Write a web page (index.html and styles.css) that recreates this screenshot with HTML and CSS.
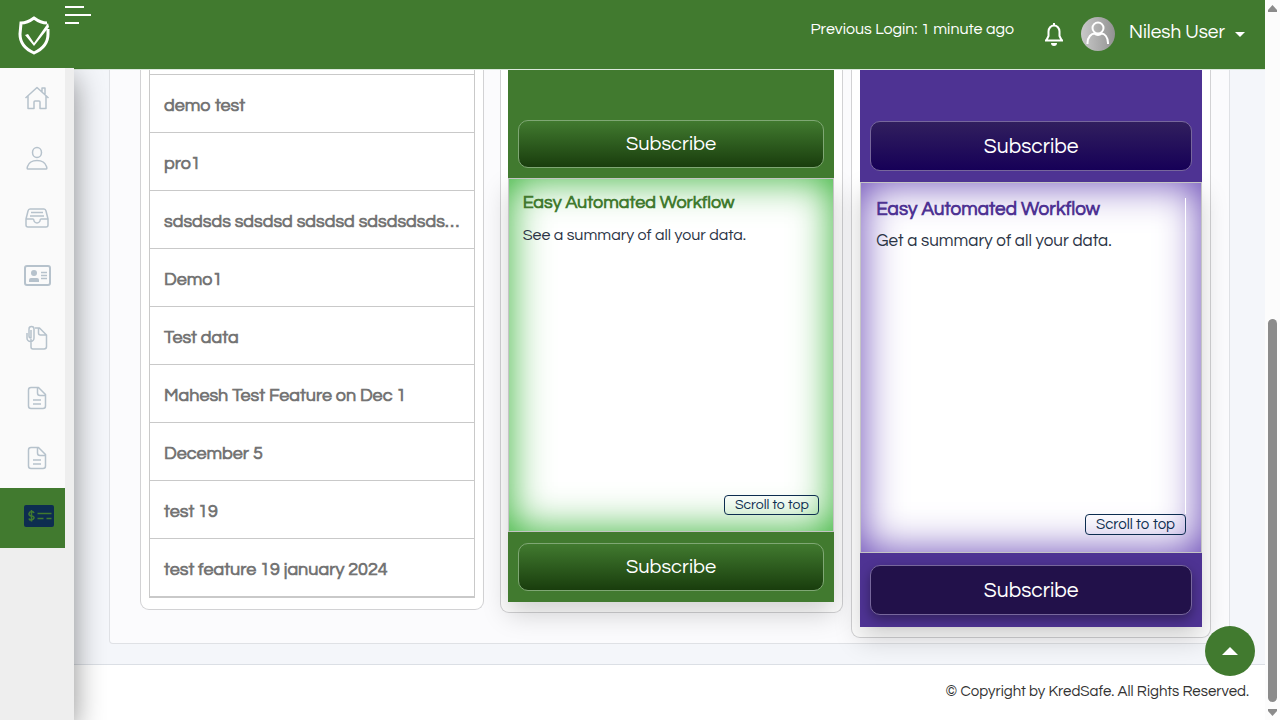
FILE: index.html
```html
<!DOCTYPE html>
<html lang="en">
<head>
<meta charset="utf-8">
<meta name="viewport" content="width=device-width, initial-scale=1">
<title>KredSafe</title>
<link rel="stylesheet" href="styles.css">
</head>
<body>
<div class="app">
  <header class="topbar">
    <a class="logo" href="#" aria-label="KredSafe home">
      <svg width="34" height="40" viewBox="0 0 34 40" fill="none" stroke="#fff" stroke-width="3"><path d="M31 14v5c0 8-5 15-14 19C8 34 3 27 3 19L4 8c5 0 9-2 13-5 4 3 8 5 13 5"/><path d="M8 20l3-1 6 9L31 8l1 4-15 19z" fill="#fff" stroke="none"/></svg>
    </a>
    <button class="menu" aria-label="Toggle menu">
      <svg width="26" height="18" viewBox="0 0 26 18" fill="#fff"><path d="M0 0h19v2H0zM0 8h26v2H0zM0 16h14v2H0z"/></svg>
    </button>
    <div class="account">
      <span class="login">Previous Login: 1 minute ago</span>
      <button class="bell" aria-label="Notifications">
        <svg width="20" height="24" viewBox="0 0 20 24" fill="none" stroke="#fff" stroke-width="2"><path d="M10 1v2M1 18.500h18M2.500 18l2-4V9.500a5.500 6 0 0 1 11 0V14l2 4" stroke-linejoin="round"/><path d="M7 21h6a3 3 0 0 1-6 0z" fill="#fff" stroke="none"/></svg>
      </button>
      <button class="user">
        <span class="avatar"><svg width="34" height="34" viewBox="0 0 34 34" fill="none" stroke="#fff" stroke-width="2"><circle cx="17" cy="11" r="5.5"/><path d="M6.500 27v-1c0-6 4-9.500 7-9.500 2 2 5 2 7 0 3 0 6.500 3.500 6.500 9.500v1"/></svg></span>
        <span class="name">Nilesh User</span>
        <svg width="10" height="5" viewBox="0 0 10 5" fill="#fff"><path d="M0 0h10L5 5z"/></svg>
      </button>
    </div>
  </header>
  <div class="layout">
    <nav class="sidebar" aria-label="Main">
      <a href="#" aria-label="Home"><svg width="26" height="26" viewBox="0 0 26 26"><path d="M1.500 13L13 2.500 24.500 13M4 11v12.500h6V17q0-1 1-1h4q1 0 1 1v6.500h6V11M18 7V3h3v7"/></svg></a>
      <a href="#" aria-label="Profile"><svg width="26" height="26" viewBox="0 0 26 26"><ellipse cx="13" cy="7.500" rx="4.500" ry="5"/><path d="M4 24c-1 0-1-1-.500-2.500C5 17 8.500 15.500 13 15.500s8 1.500 9.500 6C23 23 23 24 22 24z"/></svg></a>
      <a href="#" aria-label="Inbox"><svg width="26" height="26" viewBox="0 0 26 26"><path d="M2 14l2-8q.5-2 2-2h14q1.500 0 2 2l2 8v6q0 2-2 2H4q-2 0-2-2zM2 14h7q1 0 1 2 1 2 3 2t3-2q0-2 1-2h7M7 7.500h12M6 11h14"/></svg></a>
      <a class="high" href="#" aria-label="Contacts"><svg width="28" height="22" viewBox="0 0 28 22"><rect x="1" y="1" width="25" height="19" rx="2" stroke-width="2"/><path d="M17 7.500h6M17 10.500h6M17 13.500h6"/><circle class="solid" cx="10" cy="8" r="3"/><path class="solid" d="M5 17v-2q0-2 2-2h6q2 0 2 2v2z"/></svg></a>
      <a href="#" aria-label="Attachments"><svg width="26" height="26" viewBox="0 0 26 26"><path d="M7 14v8q0 2 2 2h11q2.500 0 2.500-2.500V10l-7-7H11M14.500 3v5q0 2 2 2h6M3 8v5a3.500 3.500 0 0 0 7 0V4a2.500 2.500 0 0 0-5 0v7q0 2 2 2V5"/></svg></a>
      <a href="#" aria-label="Documents"><svg width="26" height="26" viewBox="0 0 26 26"><path d="M7 2.500h7.500l7 7V21q0 2.500-2.500 2.500H7q-2.500 0-2.500-2.500V5Q4.500 2.500 7 2.500zM13.500 2.500V8q0 2.500 2.500 2.500h5.500M9 15h8M9 19h8"/></svg></a>
      <a href="#" aria-label="Reports"><svg width="26" height="26" viewBox="0 0 26 26"><path d="M7 2.500h7.500l7 7V21q0 2.500-2.500 2.500H7q-2.500 0-2.500-2.500V5Q4.500 2.500 7 2.500zM13.500 2.500V8q0 2.500 2.500 2.500h5.500M9 15h8M9 19h8"/></svg></a>
      <a class="active high" href="#" aria-label="Subscriptions" aria-current="page"><svg width="30" height="22" viewBox="0 0 30 22"><rect width="30" height="22" rx="2" fill="#0d2d50" stroke="none"/><path stroke="#417a2f" d="M13.500 8.500h14M13.500 13.500h6M22.500 13.500h5M10 8q-.5-1.500-2.500-1.500T5 8.500 7.500 11 10 13t-2.500 2T5 13.500M7.500 5v11.500"/></svg></a>
    </nav>
    <div class="page">
      <main class="content">
        <div class="panel">
          <section class="card features">
            <ul class="list">
              <li>demo test</li>
              <li>pro1</li>
              <li>sdsdsds sdsdsd sdsdsd sdsdsdsdsdsdsd</li>
              <li>Demo1</li>
              <li>Test data</li>
              <li>Mahesh Test Feature on Dec 1</li>
              <li>December 5</li>
              <li>test 19</li>
              <li>test feature 19 january 2024</li>
            </ul>
          </section>
          <section class="card plan green">
            <div class="plan-head"><button class="subscribe">Subscribe</button></div>
            <div class="plan-main">
              <div class="plan-body">
                <div class="plan-text">
                  <h2>Easy Automated Workflow</h2>
                  <p>See a summary of all your data.</p>
                </div>
                <button class="scroll-top">Scroll to top</button>
              </div>
              <div class="plan-foot"><button class="subscribe">Subscribe</button></div>
            </div>
          </section>
          <section class="card plan purple">
            <div class="plan-head"><button class="subscribe">Subscribe</button></div>
            <div class="plan-main">
              <div class="plan-body">
                <div class="plan-text">
                  <h2>Easy Automated Workflow</h2>
                  <p>Get a summary of all your data.</p>
                </div>
                <button class="scroll-top">Scroll to top</button>
              </div>
              <div class="plan-foot"><button class="subscribe raised">Subscribe</button></div>
            </div>
          </section>
        </div>
      </main>
      <footer class="footer">© Copyright by KredSafe. All Rights Reserved.</footer>
    </div>
  </div>
</div>
<div class="scrollbar" aria-hidden="true">
  <svg width="9" height="7" viewBox="0 0 9 7"><path d="M4.500 0L9 5v2H0V5z"/></svg>
  <div class="track"></div>
  <div class="thumb"></div>
  <svg width="9" height="7" viewBox="0 0 9 7"><path d="M4.500 7L9 2V0H0v2z"/></svg>
</div>
<button class="to-top" aria-label="Back to top"><svg width="16" height="8" viewBox="0 0 16 8" fill="#fff"><path d="M8 0l8 8H0z"/></svg></button>
</body>
</html>
```
FILE: styles.css
```css
* { box-sizing: border-box; }

body {
  margin: 0;
  min-height: 100vh;
  display: flex;
  background: #fff;
  color: #2b3445;
  font-family: Questrial, Inter, "Open Sans", sans-serif;
  font-size: 16px;
}

button {
  font-family: inherit;
  padding: 0;
  border: 0;
  background: none;
  color: inherit;
  cursor: pointer;
}

a { color: inherit; text-decoration: none; }
svg { display: block; flex: none; }

.app {
  flex: 1;
  min-width: 0;
  display: flex;
  flex-direction: column;
}

.topbar {
  display: flex;
  align-items: flex-start;
  height: 70px;
  background: #417a2f;
  border-bottom: 1px solid #dbe8dc;
  color: #fff;
}

.logo { width: 65px; padding: 15px 0 0 17px; }
.menu { margin-top: 6px; }

.account {
  display: flex;
  align-items: center;
  margin-left: auto;
  padding: 17px 20px 0 0;
}

.login { margin: 0 30px 10px 0; }
.bell { margin-right: 17px; }

.user {
  display: flex;
  align-items: center;
  gap: 10px;
  font-size: 19px;
}

.name { margin-bottom: 4px; }

.avatar {
  border-radius: 50%;
  margin-right: 4px;
  background: linear-gradient(90deg, #c9c9c9, #929292);
}

.layout { display: flex; flex: 1; }

.sidebar {
  position: relative;
  z-index: 2;
  flex: none;
  width: 74px;
  margin-top: -2px;
  background: #eee;
  box-shadow: 0 10px 30px rgba(0, 0, 0, .45);
  clip-path: inset(0 -60px 0 0);
}

.sidebar a {
  display: flex;
  align-items: center;
  width: 65px;
  height: 60px;
  padding-left: 24px;
  background: #fafafa;
}

.sidebar .high { padding-bottom: 4px; }
.sidebar .active { background: #417a2f; }

.sidebar svg {
  fill: none;
  stroke: #b6c2cc;
  stroke-width: 1.5;
  stroke-linejoin: round;
}

.sidebar .solid { fill: #b6c2cc; stroke: none; }

.page {
  flex: 1;
  min-width: 0;
  display: flex;
  flex-direction: column;
}

.content {
  flex: 1;
  padding: 0 35px 20px;
  background: #f4f6fa;
}

.panel {
  display: grid;
  grid-template-columns: repeat(3, minmax(0, 1fr));
  gap: 16px;
  align-items: start;
  padding: 0 26px 5px 30px;
  background: #fbfbfd;
  border: 1px solid #dfe1e5;
  border-top: 0;
  border-radius: 0 0 4px 4px;
}

.card {
  padding: 0 8px 10px;
  background: #fff;
  border: 1px solid #d2d2d4;
  border-top: 0;
  border-radius: 0 0 9px 9px;
}

.features { padding-bottom: 11px; }

.list {
  margin: 0;
  padding: 4px 0 0;
  list-style: none;
  border: 1px solid #c9c9c9;
  border-width: 0 1px 2px;
}

.list li {
  height: 58px;
  padding: 4px 14px 0;
  border-top: 1px solid #c9c9c9;
  color: #747474;
  font-size: 18px;
  font-weight: 700;
  line-height: 53px;
  white-space: nowrap;
  overflow: hidden;
  text-overflow: ellipsis;
}

.plan { padding-left: 7px; }
.plan-main { box-shadow: 0 12px 25px rgba(0, 0, 0, .18); }

.plan-head {
  position: relative;
  display: flex;
  align-items: flex-end;
  height: 108px;
  padding: 10px;
}

.plan-foot { padding: 11px 10px; }

.plan-body {
  display: flex;
  flex-direction: column;
  height: 354px;
  padding: 14px 14px 16px;
  border: 1px solid #c4c4c4;
}

.plan-text { flex: 1; }

.plan h2 {
  margin: 0;
  font-size: 18px;
  font-weight: 700;
  line-height: 20px;
}

.plan p {
  margin: 11px 0 0;
  line-height: 22px;
}

.subscribe {
  display: block;
  width: 100%;
  height: 48px;
  border: 1px solid #7fa774;
  border-radius: 10px;
  color: #fff;
  font-size: 20px;
}

.scroll-top {
  align-self: flex-end;
  width: 95px;
  height: 20px;
  border: 1px solid #0d2d50;
  border-radius: 4px;
  color: #0d2d50;
  font-size: 14px;
  line-height: 16px;
}

.green .plan-head, .green .plan-foot { background: #417a2f; }
.green .plan-body { box-shadow: inset 0 0 40px #30b030; }
.green h2 { color: #417a2f; }
.green .subscribe { background: linear-gradient(#417a2f, #193d0d); }

.purple {
  z-index: 1;
  margin: 0 -8px;
  padding: 0 8px 10px;
}

.purple .plan-head, .purple .plan-foot { background: #4e3393; }
.purple .plan-head { height: 112px; padding-bottom: 11px; }
.purple .plan-foot { padding: 12px 10px; }
.purple .plan-body { height: 371px; padding: 15px 15px 17px; box-shadow: inset 0 0 42px #6443b4; }
.purple .plan-text { border-right: 1px solid #fff; }
.purple h2 { color: #4e3393; font-size: 19px; line-height: 22px; }
.purple p { margin-top: 10px; font-size: 17px; }
.purple .subscribe { height: 50px; border-color: #77679c; font-size: 21px; background: linear-gradient(#311f5e, #160057); }
.purple .raised { background: #22114a; box-shadow: 0 5px 12px rgba(0, 0, 0, .35); }
.purple .scroll-top { width: 101px; height: 21px; font-size: 15px; }

.footer {
  height: 56px;
  padding: 18px 16px 0;
  border-top: 1px solid #dbdfe5;
  background: #fff;
  text-align: right;
  font-size: 15px;
  line-height: 18px;
  color: #333;
}

.scrollbar {
  flex: none;
  display: flex;
  flex-direction: column;
  align-items: center;
  width: 15px;
  height: 100vh;
  padding: 5px 0 4px;
  background: #fcfcfc;
  fill: #8b8b8b;
}

.track { flex: 307; }

.thumb {
  flex: 383;
  width: 9px;
  margin-bottom: 7px;
  border-radius: 5px;
  background: #8b8b8b;
}

.to-top {
  position: fixed;
  z-index: 2;
  right: 25px;
  bottom: 44px;
  display: grid;
  place-items: center;
  width: 50px;
  height: 50px;
  border-radius: 50%;
  background: #417a2f;
}
```
